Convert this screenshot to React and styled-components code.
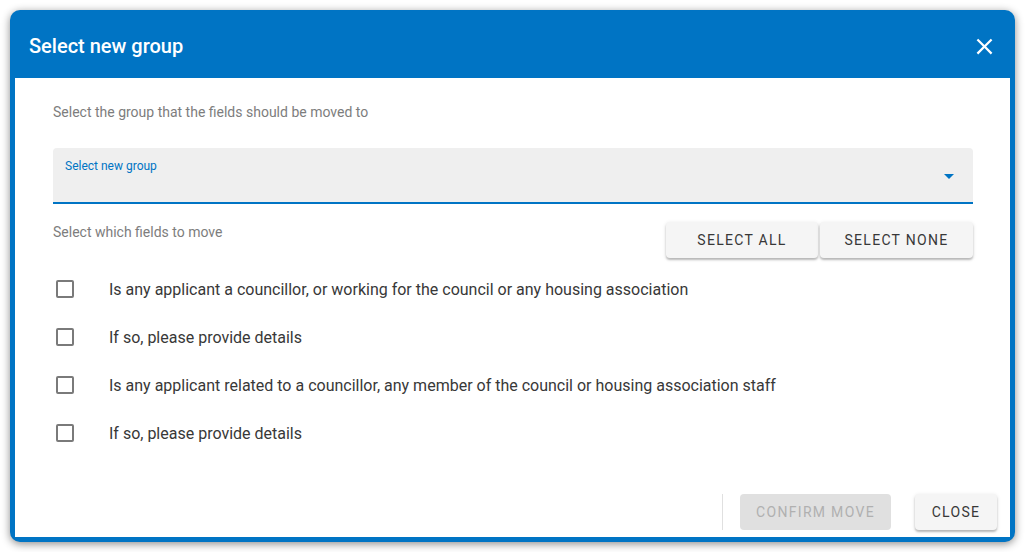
import React from 'react'
import styled, { createGlobalStyle } from 'styled-components'
import { MdClose } from 'react-icons/md'

const BLUE = '#0074c4'

const GlobalStyle = createGlobalStyle`
  html, body {
    margin: 0;
    padding: 0;
    background: #fff;
    font-family: Roboto, "Liberation Sans", Arial, sans-serif;
  }
  * { box-sizing: border-box; }
`

const fields = [
  'Is any applicant a councillor, or working for the council or any housing association',
  'If so, please provide details',
  'Is any applicant related to a councillor, any member of the council or housing association staff',
  'If so, please provide details',
]

const App = () => {
  return (<>
    <GlobalStyle />
    <Page>
      <Dialog>
        <Header>
          <h2>Select new group</h2>
          <CloseIcon><MdClose /></CloseIcon>
        </Header>
        <Body>
          <Content>
            <Hint>Select the group that the fields should be moved to</Hint>
            <SelectField>
              <label>Select new group</label>
              <Arrow />
            </SelectField>
            <FieldsBar>
              <Hint>Select which fields to move</Hint>
              <ButtonGroup>
                <RaisedButton>Select all</RaisedButton>
                <RaisedButton>Select none</RaisedButton>
              </ButtonGroup>
            </FieldsBar>
            <FieldList>
              {fields.map((f, i) => (
                <FieldRow key={i}>
                  <Checkbox />
                  <span>{f}</span>
                </FieldRow>
              ))}
            </FieldList>
          </Content>
          <Footer>
            <Divider />
            <RaisedButton $disabled $width={151}>Confirm move</RaisedButton>
            <RaisedButton $width={82}>Close</RaisedButton>
          </Footer>
        </Body>
      </Dialog>
    </Page>
  </>)
}

export default App

const Page = styled.div`
  padding: 10px;
  width: 1025px;
  height: 552px;
`

const Dialog = styled.section`
  width: 1005px;
  height: 532px;
  background: ${BLUE};
  border-radius: 10px;
  padding: 0 5px 5px 5px;
  display: flex;
  flex-direction: column;
  box-shadow: 0 2px 9px rgba(0, 0, 0, 0.45);
`

const Header = styled.header`
  height: 68px;
  flex: none;
  display: flex;
  align-items: center;
  justify-content: space-between;
  padding: 4px 12px 0 14px;
  color: #fff;

  & h2 {
    margin: 0;
    font-size: 20px;
    font-weight: 500;
  }
`

const CloseIcon = styled.i`
  display: flex;
  cursor: pointer;

  & svg {
    font-size: 27px;
  }
`

const Body = styled.div`
  flex: 1;
  background: #fff;
  display: flex;
  flex-direction: column;
`

const Content = styled.div`
  padding: 24px 37px 0 38px;
`

const Hint = styled.p`
  margin: 0;
  font-size: 14px;
  line-height: 20px;
  color: #7d7d7d;
`

const SelectField = styled.div`
  position: relative;
  margin-top: 26px;
  height: 56px;
  background: #efefef;
  border-radius: 4px 4px 0 0;
  border-bottom: 2px solid ${BLUE};
  padding: 10px 12px;

  & label {
    display: block;
    font-size: 12px;
    line-height: 16px;
    color: ${BLUE};
  }
`

const Arrow = styled.span`
  position: absolute;
  right: 19px;
  top: 26px;
  width: 0;
  height: 0;
  border-left: 5px solid transparent;
  border-right: 5px solid transparent;
  border-top: 5px solid ${BLUE};
`

const FieldsBar = styled.div`
  margin-top: 18px;
  display: flex;
  justify-content: space-between;
  align-items: flex-start;
`

const ButtonGroup = styled.div`
  display: grid;
  grid-template-columns: 152px 153px;
  gap: 2px;
`

const RaisedButton = styled.button`
  height: 36px;
  width: ${props => props.$width ? props.$width + 'px' : 'auto'};
  border: none;
  border-radius: 4px;
  font-family: inherit;
  font-size: 14px;
  font-weight: 400;
  letter-spacing: 1.3px;
  text-transform: uppercase;
  cursor: pointer;
  background: ${props => props.$disabled ? '#e0e0e0' : '#f5f5f5'};
  color: ${props => props.$disabled ? '#b0b0b0' : '#383838'};
  box-shadow: ${props => props.$disabled ? 'none' : '0 2px 2px rgba(0,0,0,0.22), 0 1px 4px rgba(0,0,0,0.12)'};
`

const FieldList = styled.div`
  margin-top: 7px;
  display: flex;
  flex-direction: column;
`

const FieldRow = styled.label`
  height: 48px;
  display: flex;
  align-items: center;
  gap: 35px;
  padding-left: 3px;
  font-size: 16px;
  color: #383838;
`

const Checkbox = styled.span`
  width: 18px;
  height: 18px;
  flex: none;
  border: 2px solid #7a7a7a;
  border-radius: 2px;
`

const Footer = styled.footer`
  margin-top: auto;
  display: flex;
  align-items: center;
  justify-content: flex-end;
  padding: 0 13px 7px 0;
  gap: 24px;
`

const Divider = styled.span`
  width: 1px;
  height: 36px;
  background: #e0e0e0;
  margin-right: -7px;
`
